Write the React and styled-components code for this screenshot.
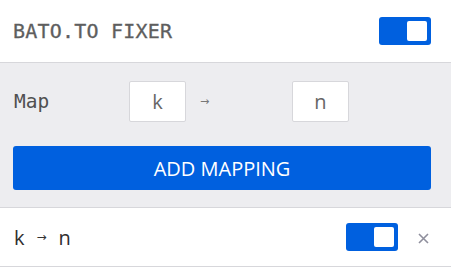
import React from "react";
import styled, { createGlobalStyle } from "styled-components";

const Global = createGlobalStyle`
  html, body { margin: 0; padding: 0; background: #ffffff; }
  body { font-family: "Open Sans", "Noto Sans", sans-serif; }
`;

const Popup = styled.div`
  width: 451px;
  background: #ffffff;
`;

const Header = styled.header`
  height: 62px;
  display: flex;
  align-items: center;
  justify-content: space-between;
  padding: 0 20px 0 13px;
  border-bottom: 1px solid #d7d7db;
`;

const Title = styled.h1`
  margin: 0;
  font-family: "DejaVu Sans Mono", monospace;
  font-weight: normal;
  font-size: 20px;
  color: #5e5e5e;
  letter-spacing: 0.2px;
  -webkit-text-stroke: 0.3px #5e5e5e;
`;

const Switch = styled.button`
  width: 52px;
  height: 28px;
  padding: 4px;
  border: none;
  border-radius: 3px;
  background: ${(p) => (p.$on ? "#0060df" : "#b1b1b3")};
  display: flex;
  justify-content: ${(p) => (p.$on ? "flex-end" : "flex-start")};
  align-items: center;
  cursor: pointer;
`;

const Knob = styled.span`
  width: 20px;
  height: 20px;
  border-radius: 2px;
  background: #ffffff;
`;

const Editor = styled.section`
  background: #ededf0;
  padding: 18px 20px 17px 13px;
  border-bottom: 1px solid #d7d7db;
`;

const MapRow = styled.div`
  display: grid;
  grid-template-columns: 116px 57px 106px 57px;
  align-items: center;
  height: 41px;
  margin-bottom: 24px;
`;

const Label = styled.label`
  font-family: "DejaVu Sans Mono", monospace;
  font-size: 19.5px;
  color: #505050;
  padding-left: 1px;
`;

const CharInput = styled.div`
  box-sizing: border-box;
  width: 57px;
  height: 41px;
  background: #ffffff;
  border: 1px solid #d7d7db;
  border-radius: 2px;
  display: flex;
  align-items: center;
  justify-content: center;
  font-size: 20px;
  color: #666666;
`;

const SmallArrow = styled.span`
  font-family: "DejaVu Sans", sans-serif;
  font-size: ${(p) => p.$size}px;
  color: ${(p) => p.$color};
  padding-left: ${(p) => p.$pad || 0}px;
`;

const AddButton = styled.button`
  width: 100%;
  height: 44px;
  border: none;
  border-radius: 3px;
  background: #0060df;
  color: #ffffff;
  font-family: "Open Sans", sans-serif;
  font-size: 20px;
  padding: 0;
  cursor: pointer;
`;

const MappingRow = styled.div`
  height: 58px;
  display: flex;
  align-items: center;
  padding: 0 22px 0 13px;
  border-bottom: 1px solid #d7d7db;
`;

const Pair = styled.div`
  flex: 1;
  display: flex;
  align-items: center;
  gap: 12px;
  font-size: 20px;
  color: #2f2f2f;
  padding-left: 1px;
`;

const Remove = styled.button`
  margin-left: 20px;
  width: 11px;
  height: 11px;
  padding: 0;
  border: none;
  background: none;
  display: flex;
  cursor: pointer;
  position: relative;
  top: 1px;
`;

export default function App() {
  return (
    <Popup>
      <Global />
      <Header>
        <Title>BATO.TO FIXER</Title>
        <Switch $on aria-label="enabled">
          <Knob />
        </Switch>
      </Header>
      <Editor>
        <MapRow>
          <Label>Map</Label>
          <CharInput>k</CharInput>
          <SmallArrow $size={11} $color="#777" $pad={14}>→</SmallArrow>
          <CharInput>n</CharInput>
        </MapRow>
        <AddButton>ADD MAPPING</AddButton>
      </Editor>
      <MappingRow>
        <Pair>
          <span>k</span>
          <SmallArrow $size={12} $color="#333">→</SmallArrow>
          <span>n</span>
        </Pair>
        <Switch $on aria-label="mapping enabled">
          <Knob />
        </Switch>
        <Remove aria-label="remove">
          <svg width="11" height="11" viewBox="0 0 11 11">
            <path d="M1 1 L10 10 M10 1 L1 10" stroke="#8f8f9d" strokeWidth="1.6" />
          </svg>
        </Remove>
      </MappingRow>
    </Popup>
  );
}
